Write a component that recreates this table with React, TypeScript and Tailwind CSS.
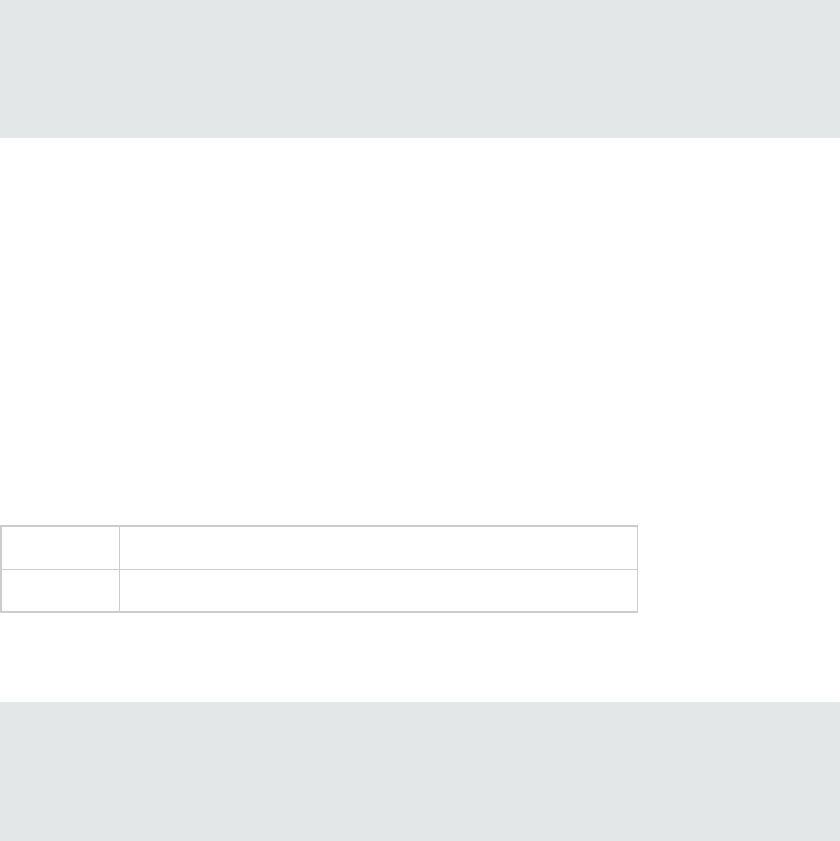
import React from 'react';

export default function App() {
  return (
    <div className="min-h-screen bg-white font-['Liberation_Sans',sans-serif]">
      {/* Header band */}
      <header className="h-[138px] w-full bg-[#e3e7e8]" />

      <main className="pt-[387px] pb-[89px]">
        <div className="w-[638px] border-t-2 border-l-2 border-b-2 border-r border-[#cccccc]">
          <div className="grid grid-cols-[118px_1fr] h-[43px] border-b border-[#cccccc]">
            <div className="border-r border-[#cccccc]" />
            <div />
          </div>
          <div className="grid grid-cols-[118px_1fr] h-[41px]">
            <div className="border-r border-[#cccccc]" />
            <div />
          </div>
        </div>
      </main>

      {/* Footer band */}
      <footer className="h-[139px] w-full bg-[#e3e7e8]" />
    </div>
  );
}
